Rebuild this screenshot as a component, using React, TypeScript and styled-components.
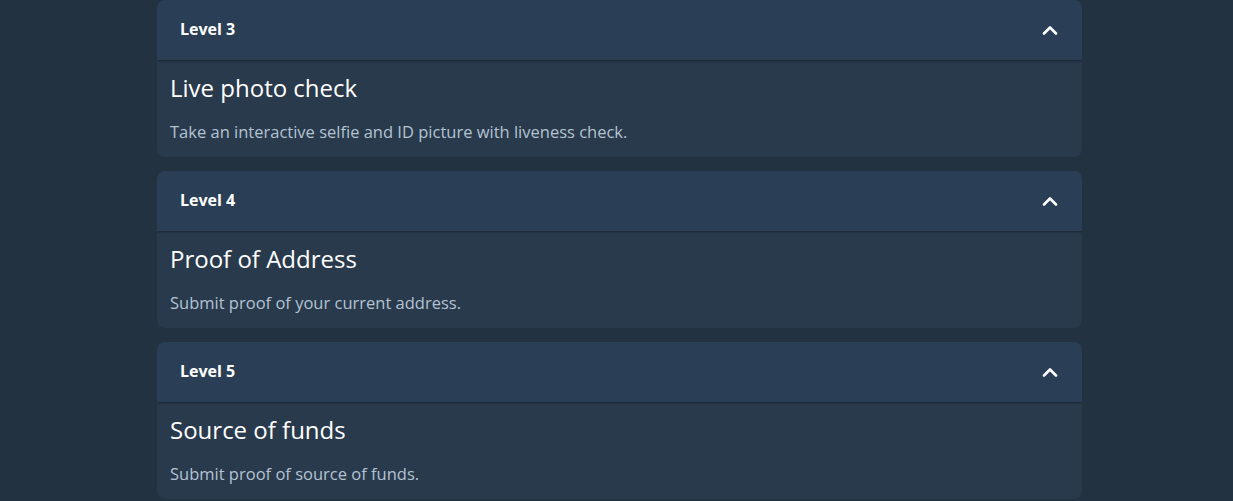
import React from "react";
import styled, { createGlobalStyle } from "styled-components";

const Global = createGlobalStyle`
  html, body { margin: 0; padding: 0; background: #223240; }
  body { font-family: "Open Sans", "Liberation Sans", Arial, sans-serif; }
`;

const Page = styled.div`
  width: 925px;
  margin: 0 auto;
  display: flex;
  flex-direction: column;
  gap: 14px;
  transform: translateX(3px);
`;

const Card = styled.section`
  background: #283a4c;
  border-radius: 8px;
  overflow: hidden;
`;

const Header = styled.div`
  height: 60px;
  background: #2a3f55;
  display: flex;
  align-items: center;
  justify-content: space-between;
  padding: 0 24px 0 23px;
  box-shadow: 0 1px 2px rgba(0, 0, 0, 0.35);
  position: relative;
`;

const LevelLabel = styled.span`
  color: #ffffff;
  font-weight: 700;
  font-size: 16px;
  line-height: 20px;
  margin-top: -2px;
`;

const Body = styled.div`
  padding: 14px 13px 15px;
`;

const Title = styled.h3`
  margin: 0;
  color: #ffffff;
  font-weight: 400;
  font-size: 24px;
  line-height: 28px;
`;

const Desc = styled.p`
  margin: 20px 0 0;
  color: #b4c3d3;
  font-size: 16.5px;
  line-height: 20px;
`;

const Chevron = () => (
  <svg width="16" height="10" viewBox="0 0 16 10" fill="none">
    <path d="M2 8.5 L8 2.5 L14 8.5" stroke="#fff" strokeWidth="2.6" strokeLinecap="round" strokeLinejoin="round" />
  </svg>
);

const items = [
  { level: "Level 3", title: "Live photo check", desc: "Take an interactive selfie and ID picture with liveness check." },
  { level: "Level 4", title: "Proof of Address", desc: "Submit proof of your current address." },
  { level: "Level 5", title: "Source of funds", desc: "Submit proof of source of funds." },
];

export default function App() {
  return (
    <>
      <Global />
      <Page>
        {items.map((it) => (
          <Card key={it.level}>
            <Header>
              <LevelLabel>{it.level}</LevelLabel>
              <Chevron />
            </Header>
            <Body>
              <Title>{it.title}</Title>
              <Desc>{it.desc}</Desc>
            </Body>
          </Card>
        ))}
      </Page>
    </>
  );
}
